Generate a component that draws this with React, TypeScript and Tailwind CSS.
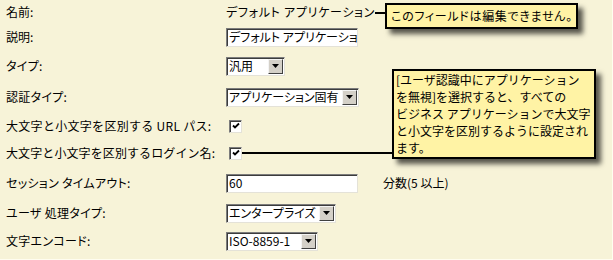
import React from "react";

const font = { fontFamily: '"Noto Sans CJK JP", "Noto Sans", sans-serif' };

function Sunken({ w, children }: { w: string; children?: React.ReactNode }) {
  return (
    <div
      className={`${w} h-[19px] bg-white border border-t-[#7c7c7c] border-l-[#7c7c7c] border-r-[#e4e2d8] border-b-[#e4e2d8] shadow-[inset_1px_1px_0_#3c3c3c] flex items-center pl-[2px] overflow-hidden whitespace-nowrap text-[12px] leading-none [font-feature-settings:'palt']`}
    >
      {children}
    </div>
  );
}

function Select({ w, value }: { w: string; value: string }) {
  return (
    <div
      className={`${w} h-[19px] bg-white border border-t-[#7c7c7c] border-l-[#7c7c7c] border-r-[#e4e2d8] border-b-[#e4e2d8] shadow-[inset_1px_1px_0_#3c3c3c] flex items-center justify-between pl-[2px] pr-[1px] whitespace-nowrap text-[12px] leading-none [font-feature-settings:'palt']`}
    >
      <span>{value}</span>
      <div className="w-[15px] h-[15px] bg-[#d4d0c8] border border-t-[#f4f4f4] border-l-[#f4f4f4] border-r-[#404040] border-b-[#404040] flex items-center justify-center shrink-0">
        <svg width="7" height="4" viewBox="0 0 7 4">
          <path d="M0 0h7L3.5 4z" fill="#000" />
        </svg>
      </div>
    </div>
  );
}

function Check() {
  return (
    <div className="w-[13px] h-[13px] bg-white border border-t-[#7c7c7c] border-l-[#7c7c7c] border-r-[#e4e2d8] border-b-[#e4e2d8] shadow-[inset_1px_1px_0_#3c3c3c] flex items-center justify-center shrink-0">
      <svg width="8" height="8" viewBox="0 0 8 8">
        <path d="M1 3.5 L3 5.5 L7 1.5" stroke="#000" strokeWidth="1.8" fill="none" />
      </svg>
    </div>
  );
}

function Row({
  h,
  label,
  lc = "",
  children,
}: {
  h: string;
  label: string;
  lc?: string;
  children?: React.ReactNode;
}) {
  return (
    <div className={`flex items-center ${h}`}>
      <div className={`w-[226px] shrink-0 pl-[6px] text-[12px] leading-none whitespace-nowrap ${lc}`}>{label}</div>
      <div className="flex items-center">{children}</div>
    </div>
  );
}

const palt = "[font-feature-settings:'palt'] tracking-[0.3px]";

export default function App() {
  return (
    <div
      className="relative w-[613px] h-[260px] bg-[#f7f3d8] text-black overflow-hidden border-r border-b border-r-[#fffdf0] border-b-[#fffdf0]"
      style={font}
    >
      <div className="flex flex-col">
        <Row h="h-[24px]" label="名前:">
          <span className="text-[12px] leading-none [font-feature-settings:'palt'] tracking-[0.7px] whitespace-nowrap">
            デフォルト アプリケーション
          </span>
          <div className="w-[19px] h-[2px] bg-black mt-[2px]" />
        </Row>
        <Row h="h-[26px]" label="説明:">
          <Sunken w="w-[132px]">デフォルト アプリケーショ</Sunken>
        </Row>
        <Row h="h-[32px]" label="タイプ:" lc={palt}>
          <Select w="w-[59px]" value="汎用" />
        </Row>
        <Row h="h-[30px]" label="認証タイプ:" lc={palt}>
          <Select w="w-[133px]" value="アプリケーション固有" />
        </Row>
        <Row h="h-[28px]" label="大文字と小文字を区別する URL パス:" lc="tracking-[0.3px]">
          <div className="pl-[3px]">
            <Check />
          </div>
        </Row>
        <Row h="h-[26px]" label="大文字と小文字を区別するログイン名:" lc="tracking-[0.1px]">
          <div className="pl-[3px] flex items-center">
            <Check />
            <div className="w-[152px] h-[2px] bg-black" />
          </div>
        </Row>
        <Row h="h-[34px]" label="セッション タイムアウト:" lc={palt}>
          <Sunken w="w-[132px]">60</Sunken>
          <span className="ml-[25px] text-[12px] leading-none whitespace-nowrap [font-feature-settings:'palt']">
            分数(5 以上)
          </span>
        </Row>
        <Row h="h-[26px]" label="ユーザ 処理タイプ:" lc={palt}>
          <Select w="w-[110px]" value="エンタープライズ" />
        </Row>
        <Row h="h-[30px]" label="文字エンコード:" lc={palt}>
          <Select w="w-[92px]" value="ISO-8859-1" />
        </Row>
      </div>

      <div className="absolute left-[385px] top-[3px] w-[193px] h-[26px] bg-[#fff3a5] border-2 border-black shadow-[5px_5px_5px_rgba(0,0,0,0.65)] flex items-center pl-[4px] text-[12px] leading-none whitespace-nowrap [font-feature-settings:'palt'] tracking-[0.7px]">
        このフィールドは編集できません。
      </div>

      <div className="absolute left-[392px] top-[69px] w-[204px] h-[90px] bg-[#fff3a5] border-2 border-black shadow-[5px_5px_5px_rgba(0,0,0,0.65)] pl-[2px] text-[12px] leading-[17px] whitespace-nowrap">
        [ユーザ認識中にアプリケーション
        <br />
        を無視]を選択すると、すべての
        <br />
        ビジネス アプリケーションで大文字
        <br />
        と小文字を区別するように設定され
        <br />
        ます。
      </div>
    </div>
  );
}
